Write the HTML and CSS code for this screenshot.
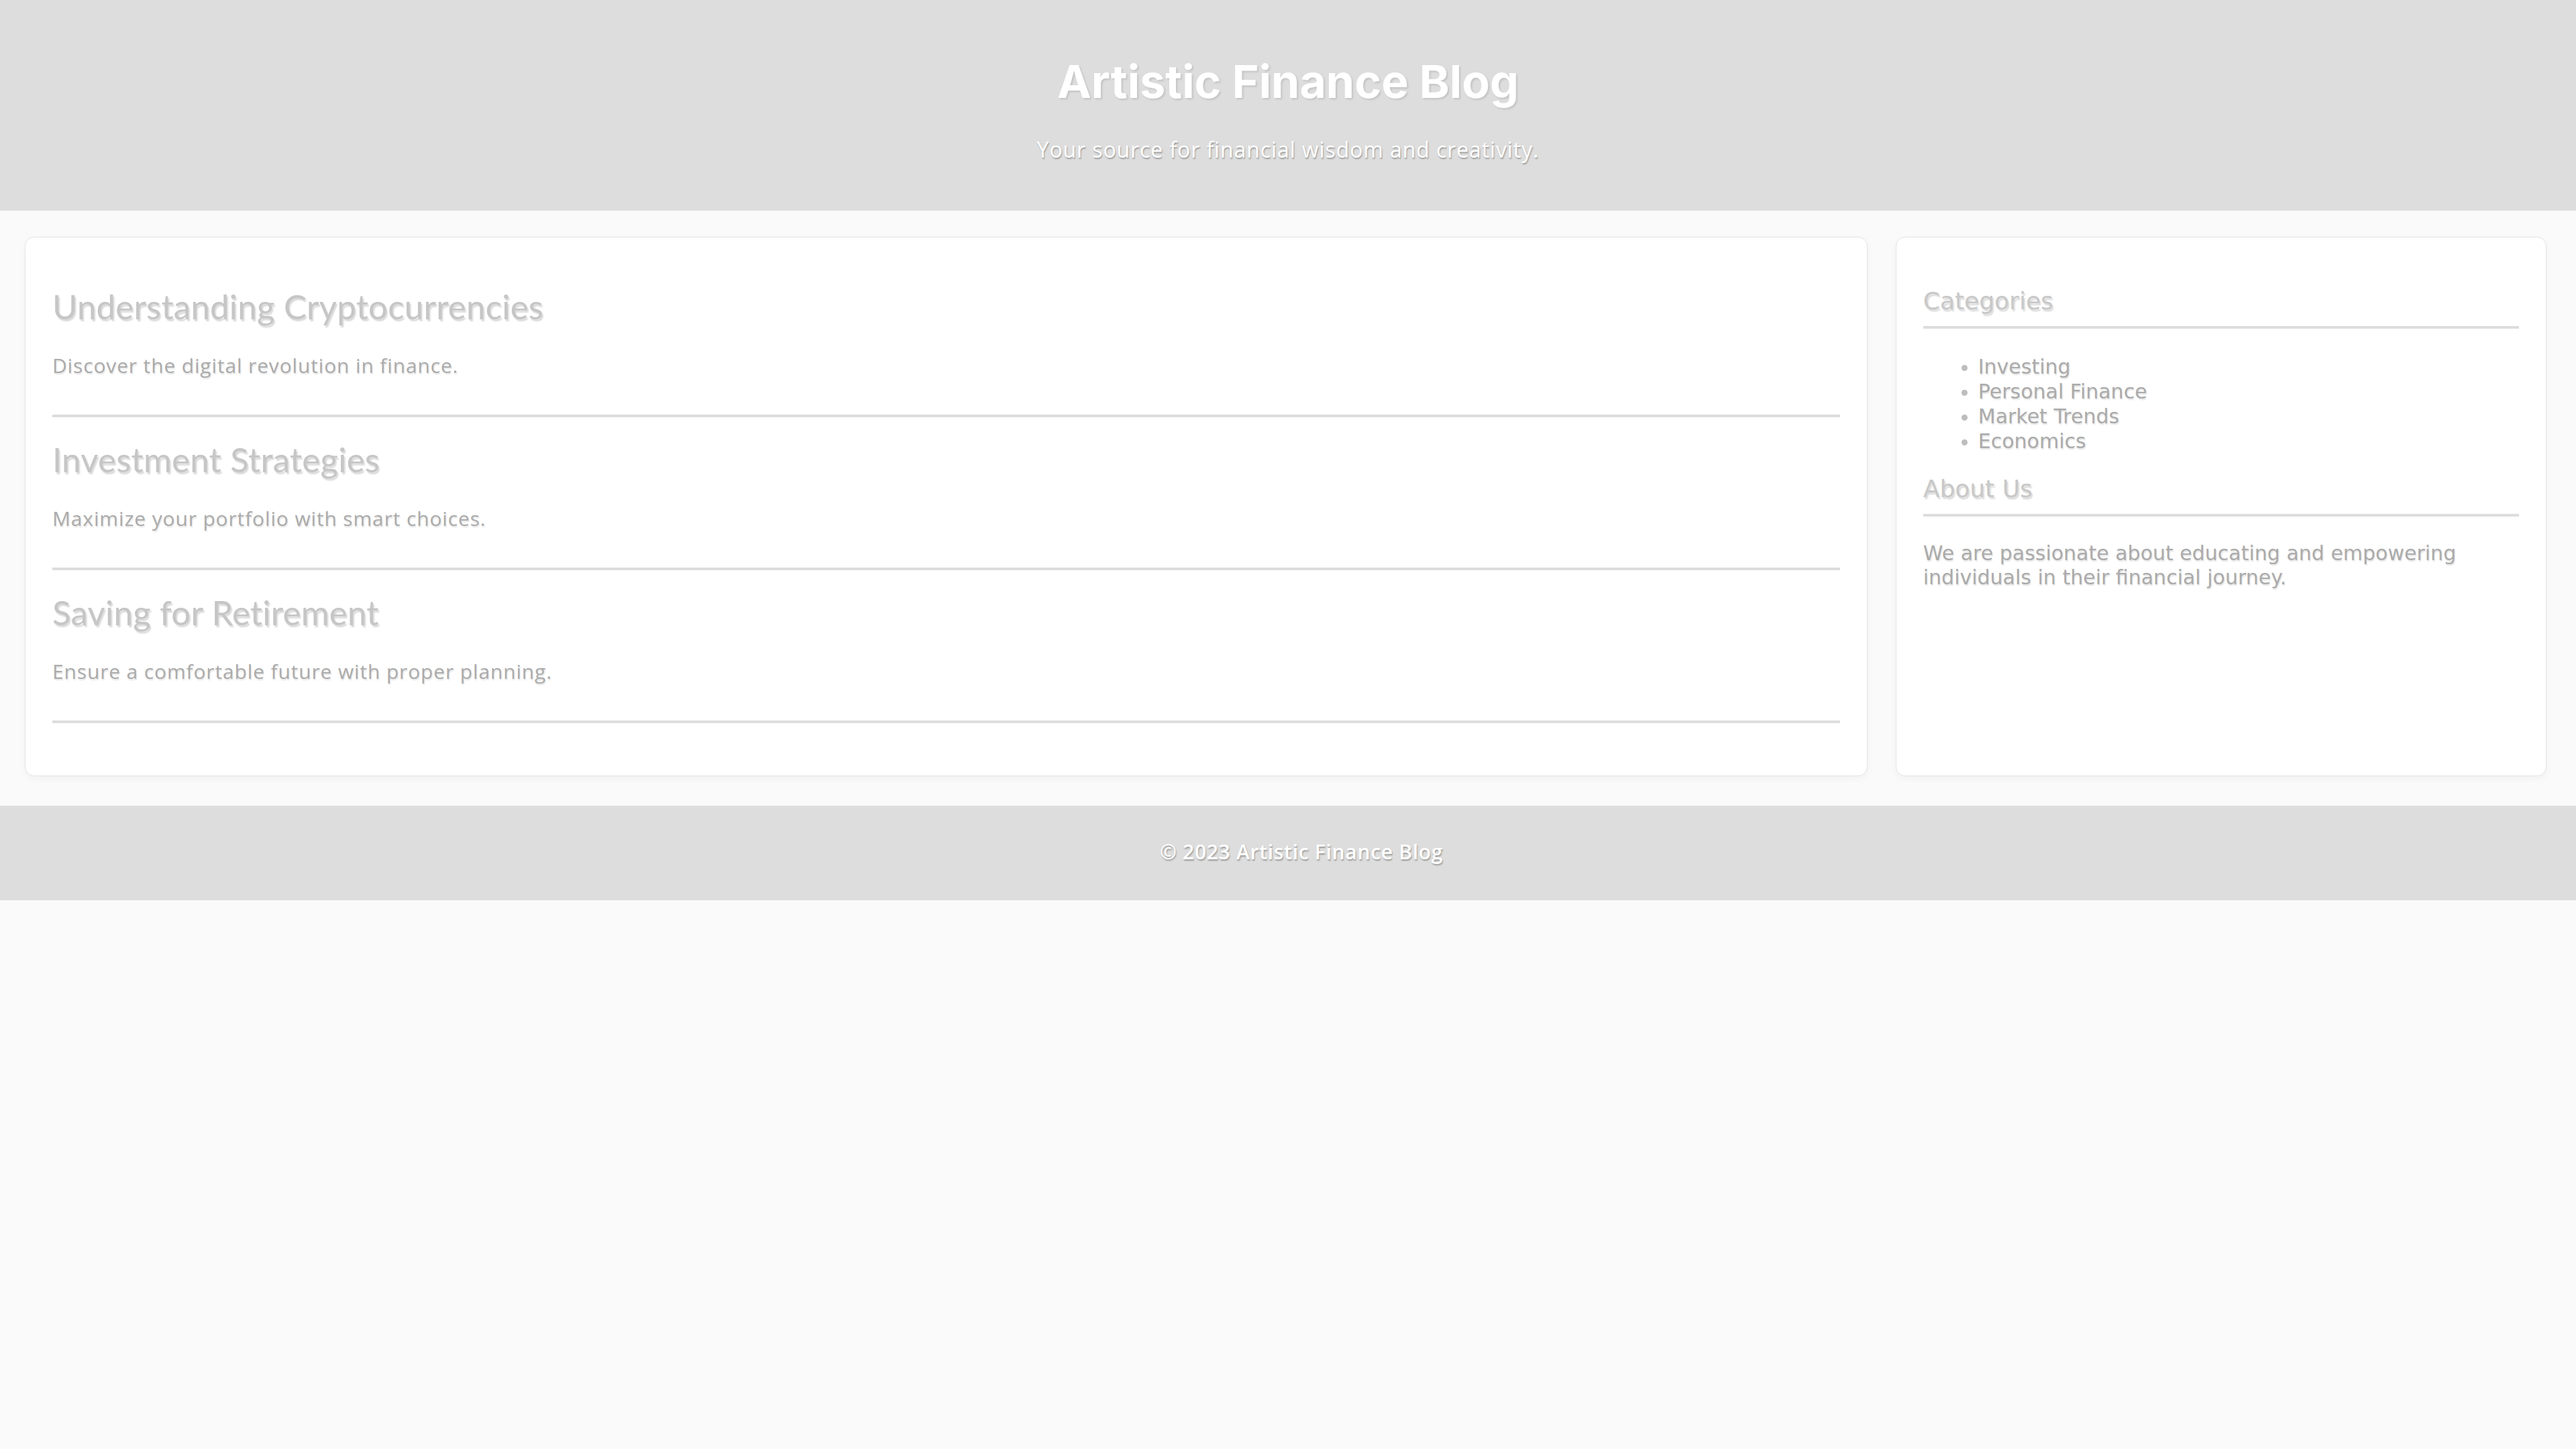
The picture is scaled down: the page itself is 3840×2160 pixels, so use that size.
FILE: index.html
```html
<!DOCTYPE html>
<html lang="en">
<head>
<meta charset="utf-8">
<title>Artistic Finance Blog</title>
<link rel="stylesheet" href="styles.css">
</head>
<body>
<header class="site-header">
  <h1 class="site-title">Artistic Finance Blog</h1>
  <p class="site-tagline">Your source for financial wisdom and creativity.</p>
</header>
<div class="layout">
  <main class="card posts">
    <article class="post">
      <h2 class="post-title">Understanding Cryptocurrencies</h2>
      <p class="post-excerpt">Discover the digital revolution in finance.</p>
    </article>
    <article class="post">
      <h2 class="post-title">Investment Strategies</h2>
      <p class="post-excerpt">Maximize your portfolio with smart choices.</p>
    </article>
    <article class="post">
      <h2 class="post-title">Saving for Retirement</h2>
      <p class="post-excerpt">Ensure a comfortable future with proper planning.</p>
    </article>
  </main>
  <aside class="card sidebar">
    <h3 class="widget-title">Categories</h3>
    <ul class="category-list">
      <li>Investing</li>
      <li>Personal Finance</li>
      <li>Market Trends</li>
      <li>Economics</li>
    </ul>
    <h3 class="widget-title widget-title-second">About Us</h3>
    <p class="about-text">We are passionate about educating and empowering individuals in their financial journey.</p>
  </aside>
</div>
<footer class="site-footer">
  <p class="footer-text">© 2023 Artistic Finance Blog</p>
</footer>
</body>
</html>
```

FILE: styles.css
```css
html, body {
  margin: 0;
  padding: 0;
}

body {
  background: #fafafa;
  font-family: "Open Sans", Lato, sans-serif;
  min-height: 2160px;
}

.site-header {
  background: #dddddd;
  height: 314px;
  box-sizing: border-box;
  padding-top: 79px;
  text-align: center;
}

.site-title {
  margin: 0 0 40px;
  font-family: Inter, "DejaVu Sans", sans-serif;
  font-weight: 700;
  font-size: 68px;
  line-height: 84px;
  color: #ffffff;
  text-shadow: 2px 2px 3px rgba(0, 0, 0, 0.12);
}

.site-tagline {
  margin: 0;
  font-size: 32px;
  line-height: 40px;
  letter-spacing: 0.9px;
  color: #ffffff;
  text-shadow: 1px 2px 2px rgba(0, 0, 0, 0.3);
}

.layout {
  display: flex;
  gap: 42px;
  padding: 39px 44px 44px 37px;
  align-items: stretch;
}

.card {
  background: #ffffff;
  border: 1px solid #e4e4e4;
  border-radius: 14px;
  padding: 40px 40px 45px;
  box-shadow: 0 4px 12px rgba(0, 0, 0, 0.04);
  min-width: 0;
}

.posts {
  flex: 3 1 0;
}

.sidebar {
  flex: 1 1 0;
  font-family: "DejaVu Sans", sans-serif;
}

.post {
  border-bottom: 4px solid #dddddd;
  padding-bottom: 55px;
  margin-bottom: 33px;
}

.post-title {
  margin: 33px 0 40px;
  font-family: Lato, "Open Sans", sans-serif;
  font-weight: 400;
  font-size: 51px;
  line-height: 60px;
  letter-spacing: 0.2px;
  color: #c6c6c6;
  text-shadow: 2px 3px 2px rgba(0, 0, 0, 0.15);
}

.post-excerpt {
  margin: 0;
  font-size: 30px;
  line-height: 36px;
  letter-spacing: 0.85px;
  color: #ababab;
  text-shadow: 1px 2px 2px rgba(0, 0, 0, 0.12);
}

.widget-title {
  margin: 32px 0 0;
  padding-bottom: 14px;
  border-bottom: 4px solid #dddddd;
  font-weight: 400;
  font-size: 36px;
  line-height: 46px;
  color: #c8c8c8;
  text-shadow: 2px 3px 2px rgba(0, 0, 0, 0.15);
}

.widget-title-second {
  margin-top: 30px;
}

.category-list {
  margin: 38px 0 0;
  padding-left: 82px;
  list-style: disc;
  font-size: 30px;
  line-height: 37px;
  color: #ababab;
  text-shadow: 1px 2px 2px rgba(0, 0, 0, 0.12);
}

.category-list li::marker {
  color: #bdbdbd;
}

.about-text {
  margin: 37px 0 0;
  font-size: 30px;
  line-height: 36px;
  color: #ababab;
  text-shadow: 1px 2px 2px rgba(0, 0, 0, 0.12);
}

.site-footer {
  background: #dddddd;
  padding: 51px 0 54px 40px;
  text-align: center;
}

.footer-text {
  margin: 0;
  font-size: 30px;
  font-weight: 600;
  line-height: 36px;
  letter-spacing: 0.7px;
  color: #ffffff;
  text-shadow: 1px 2px 2px rgba(0, 0, 0, 0.3);
}
```
